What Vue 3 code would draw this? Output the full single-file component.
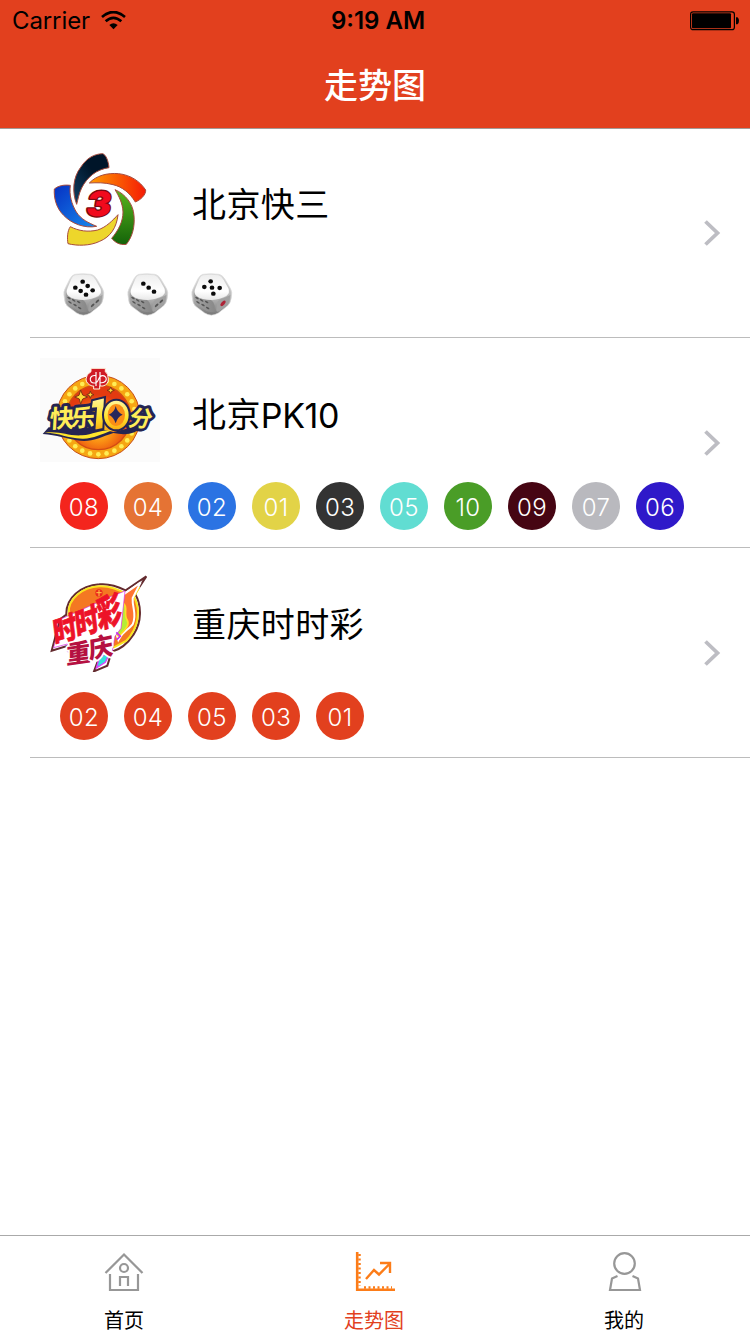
<script setup>
const lotteries = [
  {
    id: 'k3',
    name: '北京快三',
    dice: [
      { pips: [[66, 27], [44, 45], [81, 40], [60, 55], [96, 53], [76, 66]] },
      { pips: [[56, 33], [72, 45], [88, 57]] },
      { pips: [[66, 26], [47, 43], [70, 45], [93, 46], [74, 63]], red: true }
    ],
    balls: []
  },
  {
    id: 'pk10',
    name: '北京',
    latin: 'PK10',
    dice: [],
    balls: [
      ['08', '#f4251d'], ['04', '#e57334'], ['02', '#2b73e3'], ['01', '#e2d347'], ['03', '#333333'],
      ['05', '#61ddd2'], ['10', '#4a9d27'], ['09', '#460513'], ['07', '#b9b9be'], ['06', '#2f19c9']
    ]
  },
  {
    id: 'ssc',
    name: '重庆时时彩',
    dice: [],
    balls: ['02', '04', '05', '03', '01'].map((n) => [n, '#e2401e'])
  }
]
const bulbs = Array.from({ length: 28 }, (_, i) => {
  const a = (i / 28) * Math.PI * 2
  return { x: 190 + 111 * Math.cos(a), y: 202 + 111 * Math.sin(a) }
})
</script>

<template>
  <div class="screen">
    <header class="header">
      <div class="status">
        <div class="carrier">
          <span class="carrier-name">Carrier</span>
          <svg class="wifi" viewBox="0 0 75 57">
            <path d="M3 18Q37 -12 72 18" fill="none" stroke="#000" stroke-width="8" />
            <path d="M14 31Q37 10 61 31" fill="none" stroke="#000" stroke-width="8" />
            <path d="M25 42Q37 32 50 42L37.500 55Z" />
          </svg>
        </div>
        <span class="time">9:19 AM</span>
        <svg class="battery" viewBox="0 0 50 20">
          <rect x="0.600" y="0.900" width="43.800" height="17.800" rx="2.500" fill="none" stroke="#000" stroke-width="1.200" />
          <rect x="2" y="2.300" width="39" height="15" rx="1" />
          <path d="M46 6.300h1.500q1.500 1 1.500 3.500t-1.500 3.500H46z" />
        </svg>
      </div>
      <h1 class="title">走势图</h1>
    </header>

    <main class="list">
      <section v-for="item in lotteries" :key="item.id" class="row">
        <div class="head">
          <svg v-if="item.id === 'k3'" class="logo" viewBox="0 24 360 312">
            <defs>
              <linearGradient id="navy" x1="0" y1="1" x2="1" y2="0"><stop stop-color="#123f63" /><stop offset=".6" stop-color="#001529" /></linearGradient>
              <linearGradient id="flame"><stop stop-color="#ff9c00" /><stop offset="1" stop-color="#f51b05" /></linearGradient>
              <linearGradient id="leaf" x1="0" y1="0" x2="0" y2="1"><stop stop-color="#5ab51d" /><stop offset="1" stop-color="#146309" /></linearGradient>
              <linearGradient id="sky" x1="0" y1="0" x2="1" y2="1"><stop stop-color="#0630c2" /><stop offset="1" stop-color="#1689ed" /></linearGradient>
            </defs>
            <g stroke="#a74b3d" stroke-width="3" stroke-linejoin="round">
              <path d="M110 193C96 157 98 113 122 82C140 54 162 42 188 41C197 44 205 60 207 83C169 88 141 112 125 144C117 160 114 178 110 193Z" fill="url(#navy)" />
              <path d="M148 129C169 107 201 98 236 101C272 105 300 124 317 150C318 164 303 179 286 186C269 158 246 140 219 134C194 127 170 128 148 129Z" fill="url(#flame)" />
              <path d="M225 149C256 162 280 192 282 227C285 260 277 291 259 313C239 316 225 307 215 295C236 270 249 244 249 216C248 190 237 169 225 149Z" fill="url(#leaf)" />
              <path d="M234 224C230 263 211 291 179 304C150 318 111 318 84 311C81 296 82 272 91 260C116 273 144 277 173 270C200 261 218 241 234 224Z" fill="#edd62b" />
              <path d="M43 147C57 136 73 134 91 136C87 165 95 193 109 216C124 239 145 248 170 259C134 266 94 251 70 225C49 204 41 174 43 147Z" fill="url(#sky)" />
            </g>
            <g class="mark-latin"><text transform="translate(135 229) skewX(-9) scale(1.080 1)" font-size="102" font-weight="900" fill="#f10a1d" stroke="#7c0a12" stroke-width="8" stroke-linejoin="round" paint-order="stroke">3</text></g>
          </svg>

          <svg v-else-if="item.id === 'pk10'" class="logo" viewBox="15 24 360 312">
            <defs>
              <radialGradient id="sun" cy=".65"><stop stop-color="#ffd928" /><stop offset=".5" stop-color="#f98a13" /><stop offset="1" stop-color="#e33a10" /></radialGradient>
              <linearGradient id="gold" x1="0" y1="0" x2="0" y2="1"><stop stop-color="#fff6a0" /><stop offset=".6" stop-color="#ffe32a" /><stop offset="1" stop-color="#f9a912" /></linearGradient>
            </defs>
            <rect x="15" y="24" width="360" height="312" fill="#fbfbfb" />
            <circle cx="190" cy="201" r="125" fill="#f6a613" stroke="#c74a17" stroke-width="3" />
            <circle v-for="(b, i) in bulbs" :key="i" :cx="b.x" :cy="b.y" r="7" fill="#ffed55" />
            <circle cx="190" cy="202" r="97" fill="url(#sun)" stroke="#d44b13" stroke-width="4" />
            <path d="M137 120l6 15 15 6-15 6-6 15-4-15-14-6 13-5zM166 123l3 8 8 3-8 3-3 8-3-8-8-3 8-3zM227 111l3 7 8 3-8 3-3 7-3-7-8-3 8-3z" fill="#ffda38" stroke="#813613" stroke-width="3" />
            <path d="M168 55h43v10q9 5 9 22t-16 21h-10v9h-18v-9h-5q-18-7-18-21t15-22z" fill="#d01b25" stroke="#fff4df" stroke-width="3" />
            <path d="M183 66v42M195 66v42M183 77c-22-5-22 23-5 22 17 0 9-22 24-22 17 0 16 23-6 21" fill="none" stroke="#fff" stroke-width="3.500" />
            <g stroke="#252451" stroke-width="18" paint-order="stroke" stroke-linejoin="round" fill="#252451" font-weight="700" class="mark">
              <text transform="translate(43 234) rotate(-3) skewX(-6)" font-size="74">快</text>
              <text transform="translate(107 230) rotate(-2) skewX(-6)" font-size="72">乐</text>
              <text transform="translate(277 227) rotate(4) skewX(-12)" font-size="68">分</text>
            </g>
            <path d="M23 252L41 232L105 235L176 232L235 246L322 225C304 255 269 256 235 249C193 263 166 279 126 271C94 265 67 256 23 252Z" fill="#252451" />
            <g fill="#ffed58" font-weight="700" class="mark">
              <text transform="translate(43 234) rotate(-3) skewX(-6)" font-size="74">快</text>
              <text transform="translate(107 230) rotate(-2) skewX(-6)" font-size="72">乐</text>
              <text transform="translate(277 227) rotate(4) skewX(-12)" font-size="68">分</text>
            </g>
            <path d="M171 151L210 141L205 237L178 242L183 175L167 176Z" fill="url(#gold)" stroke="#252451" stroke-width="6" />
            <ellipse cx="244" cy="195" rx="40" ry="46" fill="url(#gold)" stroke="#252451" stroke-width="6" />
            <ellipse cx="244" cy="195" rx="26" ry="33" fill="#fa8e16" />
            <path d="M242 168Q247 188 263 194Q247 200 242 220Q236 200 221 194Q238 188 242 168Z" fill="#28285c" />
            <path d="M29 248C78 242 98 259 141 256C177 253 196 238 231 241C201 253 173 267 142 266C93 264 78 249 29 248Z" fill="#ffe52c" />
          </svg>

          <svg v-else class="logo" viewBox="0 9 360 312">
            <path d="M79 149C77 99 122 62 178 58C207 55 237 66 257 76L319 34L285 86C306 122 305 171 281 208C260 240 239 254 215 260L202 302L162 319L179 273L95 239L35 257L60 163Z" fill="#fff" stroke="#642b2f" stroke-width="6" />
            <path d="M86 145C84 101 128 66 178 64C216 62 248 80 266 91L298 66L282 95C304 137 295 190 258 228L222 247L163 245L80 180Z" fill="#f47822" stroke="#fae41d" stroke-width="6" />
            <path d="M240 96L302 52L278 99C276 130 292 148 278 178C260 200 250 196 235 225L225 193L248 166L249 130Z" fill="#ff7530" stroke="#fff" stroke-width="6" />
            <path d="M247 112C267 126 249 147 261 164C272 182 251 197 236 214L225 203L243 178Z" fill="#b6ed35" stroke="#ffdf24" stroke-width="5" />
            <path d="M178 277L214 256L196 292L169 309Z" fill="#33e0dc" stroke="#df3dff" stroke-width="4" />
            <circle cx="177" cy="84" r="11" fill="#eb2a1d" /><path d="M169 83h16M177 75v19" stroke="#ffcb46" stroke-width="3" />
            <path d="M63 162L209 96L255 78L243 190L225 214L216 263L165 276L82 260L82 237L41 248Z" fill="#fff" stroke="#d424e6" stroke-width="2" />
            <g class="mark" font-weight="900" fill="#ed1328" stroke="#ed1328" stroke-width="2">
              <text transform="translate(44 239) rotate(-19) skewX(-12) scale(.93 1.140)" font-size="79">时</text>
              <text transform="translate(110 216) rotate(-19) skewX(-12) scale(.93 1.180)" font-size="79">时</text>
              <text transform="translate(176 190) rotate(-17) skewX(-10) scale(.95 1.350)" font-size="79">彩</text>
            </g>
            <g class="mark" font-weight="900" fill="#b51041" stroke="#fff" stroke-width="10" paint-order="stroke" stroke-linejoin="round">
              <text transform="translate(79 298) rotate(-8) skewX(-8)" font-size="75">重</text>
              <text transform="translate(148 282) rotate(-12) skewX(-8)" font-size="75">庆</text>
            </g>
            <path d="M229 202l12 12-11 10" fill="none" stroke="#c42bf2" stroke-width="5" />
          </svg>
          <h2 class="name">{{ item.name }}<span v-if="item.latin" class="latin">{{ item.latin }}</span></h2>
        </div>

        <div class="results">
          <svg v-for="(die, i) in item.dice" :key="'d' + i" class="die" viewBox="-2 -2 144 144">
            <defs>
              <linearGradient id="body" x1="0" y1="0" x2="0" y2="1"><stop stop-color="#ddd" /><stop offset=".55" stop-color="#bbb" /><stop offset="1" stop-color="#777" /></linearGradient>
              <linearGradient id="side"><stop stop-color="#a5a5a5" /><stop offset="1" stop-color="#888" /></linearGradient>
              <linearGradient id="face" x1="0" y1="0" x2="0" y2="1"><stop stop-color="#eee" /><stop offset=".65" stop-color="#fff" /><stop offset="1" stop-color="#e8e8e8" /></linearGradient>
            </defs>
            <path d="M42 5Q65 1 91 5Q101 7 109 20L125 47Q132 58 128 75Q126 91 117 99L89 121Q68 134 48 121L21 101Q12 93 11 75Q6 57 16 42L28 18Q34 8 42 5Z" fill="url(#body)" stroke="#ddd" stroke-width="2" />
            <path d="M16 58Q18 70 33 74L67 82Q76 87 78 99V117Q67 120 54 115L24 95Q13 81 16 58Z" fill="url(#side)" />
            <path d="M85 90Q90 79 104 77L125 67Q125 83 116 96L92 116Q81 121 83 107Z" fill="#a1a1a1" />
            <path d="M43 8Q66 5 89 8Q98 10 105 22L119 47Q125 61 113 70Q94 81 70 82Q38 82 23 69Q14 60 21 45L32 19Q36 10 43 8Z" fill="url(#face)" />
            <g fill="#555"><ellipse v-for="(p, n) in [[25, 76], [39, 83], [54, 88], [28, 89], [43, 97], [57, 106]]" :key="n" :cx="p[0]" :cy="p[1]" rx="6" ry="2.500" :transform="`rotate(32 ${p[0]} ${p[1]})`" /></g>
            <ellipse v-if="die.red" cx="103" cy="92" rx="10" ry="5" fill="#ae2337" transform="rotate(-48 103 92)" />
            <g v-else fill="#555"><ellipse cx="96" cy="98" rx="7" ry="3" transform="rotate(-44 96 98)" /><ellipse cx="110" cy="86" rx="7" ry="3" transform="rotate(-44 110 86)" /></g>
            <ellipse v-for="(p, n) in die.pips" :key="'p' + n" :cx="p[0]" :cy="p[1]" rx="7" ry="6.500" fill="#0b0b0b" />
          </svg>
          <span v-for="(ball, i) in item.balls" :key="'b' + i" class="ball" :style="{ backgroundColor: ball[1] }">{{ ball[0] }}</span>
        </div>
        <svg class="chevron" viewBox="0 0 18 28"><path d="M2.500 2.500L14.500 14L2.500 25.500" fill="none" stroke="#bdbdc3" stroke-width="3.800" /></svg>
      </section>
    </main>

    <nav class="tabs">
      <div class="tab">
        <svg class="icon" viewBox="0 0 40 40" fill="none" stroke="#979797" stroke-width="2.200">
          <path d="M1.500 21L20 2.500L38.500 21" /><path d="M6 22v16h28V22" /><circle cx="20" cy="16" r="4" /><path d="M16 34v-9h8v9" />
        </svg>
        <span>首页</span>
      </div>
      <div class="tab active">
        <svg class="icon" viewBox="-1 0 40 40" fill="none" stroke="#fc7c18" stroke-width="2.400">
          <path d="M2.200 0v37.800H40" stroke-width="2.600" />
          <path d="M4.500 2v32" stroke-width="2.500" stroke-dasharray="2 2.500" /><path d="M9 35.500h28" stroke-width="2.500" stroke-dasharray="2 2.500" />
          <path d="M11 27L19 18L24 22.500L35 11.500M25 11h10v10" />
        </svg>
        <span>走势图</span>
      </div>
      <div class="tab">
        <svg class="icon" viewBox="-1 0 40 40" fill="none" stroke="#979797" stroke-width="2.200">
          <circle cx="19.500" cy="11.500" r="10.300" /><path d="M12.500 24L7 26.500L5 38h30L33 26.500L27.500 24" />
        </svg>
        <span>我的</span>
      </div>
    </nav>
  </div>
</template>

<style>
html, body { margin: 0; background: #fff; }
</style>

<style scoped>
.screen { display: flex; flex-direction: column; width: 750px; height: 1334px; overflow: hidden; background: #fff; color: #000; font-family: Inter, "Noto Sans CJK SC", sans-serif; }
.header { box-sizing: border-box; height: 129px; flex: none; background: #e2401e; border-bottom: 1px solid #a39a97; }
.status { display: grid; grid-template-columns: 1fr auto 1fr; align-items: center; height: 42px; padding: 0 10px 0 12px; }
.carrier { display: flex; align-items: center; gap: 11px; }
.carrier-name { font-size: 24px; line-height: 42px; letter-spacing: -0.1px; }
.wifi { width: 25px; height: 19px; margin-top: -1px; }
.time { font-size: 24px; line-height: 42px; font-weight: 600; padding: 0 0 0 4px; }
.battery { width: 50px; height: 20px; justify-self: end; margin-top: -1px; }
.title { margin: 0; text-align: center; color: #fff; font: 500 34px/84px "Noto Sans CJK SC", sans-serif; }
.list { flex: 1; margin-top: -1px; }
.row { position: relative; box-sizing: border-box; height: 210px; margin-left: 30px; padding: 20px 0 0 10px; border-bottom: 1px solid #bcbcbc; }
.head { display: flex; align-items: center; height: 104px; gap: 32px; }
.logo { width: 120px; height: 104px; flex: none; }
.mark { font-family: "Noto Sans CJK SC", sans-serif; }
.mark-latin { font-family: Inter, sans-serif; }
.name { margin: 6px 0 0; font: 400 34px/50px "Noto Sans CJK SC", sans-serif; letter-spacing: 0.4px; }
.latin { font-family: Inter, sans-serif; letter-spacing: -0.4px; vertical-align: -1px; line-height: 1; }
.results { display: flex; gap: 16px; height: 48px; margin-top: 20px; padding-left: 20px; }
.die { width: 48px; height: 48px; }
.ball { box-sizing: border-box; width: 48px; height: 48px; border-radius: 50%; color: #fff; font-size: 24px; font-weight: 350; line-height: 51px; letter-spacing: 0.4px; text-align: center; }
.chevron { position: absolute; right: 29px; top: 91px; width: 18px; height: 28px; }
.tabs { box-sizing: border-box; display: flex; height: 99px; flex: none; border-top: 1px solid #aaa; }
.tab { width: 250px; display: flex; flex-direction: column; align-items: center; box-sizing: border-box; padding: 16px 2px 0 0; font: 400 20px/30px "Noto Sans CJK SC", sans-serif; }
.tab span { margin-top: 13px; }
.icon { width: 40px; height: 40px; flex: none; overflow: visible; }
.active { color: #e2401e; }
</style>
